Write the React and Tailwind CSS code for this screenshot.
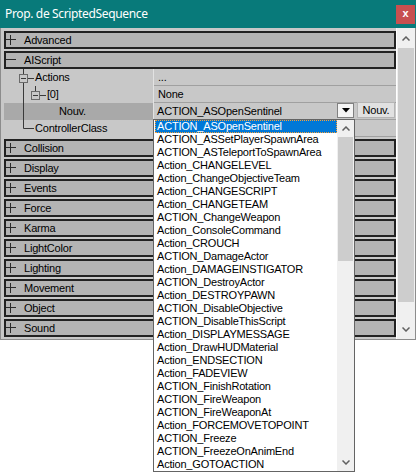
import React from "react";

const categories = [
  "Collision",
  "Display",
  "Events",
  "Force",
  "Karma",
  "LightColor",
  "Lighting",
  "Movement",
  "Object",
  "Sound",
];

const actions = [
  "ACTION_ASOpenSentinel",
  "ACTION_ASSetPlayerSpawnArea",
  "ACTION_ASTeleportToSpawnArea",
  "Action_CHANGELEVEL",
  "Action_ChangeObjectiveTeam",
  "Action_CHANGESCRIPT",
  "Action_CHANGETEAM",
  "ACTION_ChangeWeapon",
  "Action_ConsoleCommand",
  "Action_CROUCH",
  "ACTION_DamageActor",
  "Action_DAMAGEINSTIGATOR",
  "ACTION_DestroyActor",
  "Action_DESTROYPAWN",
  "ACTION_DisableObjective",
  "ACTION_DisableThisScript",
  "Action_DISPLAYMESSAGE",
  "Action_DrawHUDMaterial",
  "Action_ENDSECTION",
  "Action_FADEVIEW",
  "ACTION_FinishRotation",
  "ACTION_FireWeapon",
  "ACTION_FireWeaponAt",
  "Action_FORCEMOVETOPOINT",
  "ACTION_Freeze",
  "ACTION_FreezeOnAnimEnd",
  "Action_GOTOACTION",
];

function Chevron({ down = false }) {
  return (
    <svg width="8" height="5" viewBox="0 0 8 5">
      <polyline
        points={down ? "0.5,0.5 4,4 7.5,0.5" : "0.5,4.5 4,1 7.5,4.5"}
        fill="none"
        stroke="#606060"
        strokeWidth="1.5"
      />
    </svg>
  );
}

function Expander({ open }) {
  return (
    <svg width="10" height="10" viewBox="0 0 10 10" className="shrink-0">
      <line x1="0" y1="4.5" x2="10" y2="4.5" stroke="#2a2a2a" strokeWidth="1" />
      {!open && <line x1="4.5" y1="0" x2="4.5" y2="10" stroke="#2a2a2a" strokeWidth="1" />}
    </svg>
  );
}

function Category({ label, open = false }) {
  return (
    <div className="h-[18px] border-2 border-[#222222] bg-[#b4b4b4] flex items-center">
      <Expander open={open} />
      <span className="ml-[8px] leading-none">{label}</span>
    </div>
  );
}

function Row({ left, right, leftClass = "", rightClass = "", children }) {
  return (
    <div className="h-[17px] flex">
      <div className={"w-[149px] h-full flex items-center " + leftClass}>{left}</div>
      <div className="w-px h-full bg-[#e2e2e2]" />
      <div className={"flex-1 h-full flex items-center border-b border-[#a0a0a0] " + rightClass}>
        {right}
        {children}
      </div>
    </div>
  );
}

export default function App() {
  return (
    <div
      className="relative w-[416px] h-[472px] bg-white text-black text-[11px] tracking-[-0.2px]"
      style={{ fontFamily: "'Liberation Sans', Arial, sans-serif" }}
    >
      {/* window */}
      <div className="w-[416px] border-x border-b border-[#8c8c8c]">
        <div className="h-[28px] -mx-px bg-[#087a7a] flex items-center justify-between">
          <span
            className="pl-[5px] text-white text-[12px] tracking-[-0.35px]"
            style={{ fontFamily: "'Noto Sans', 'Open Sans', sans-serif" }}
          >
            Prop. de ScriptedSequence
          </span>
          <div className="w-[19px] h-[19px] mr-[1px] bg-[#c75050] flex items-center justify-center text-white text-[11px] font-bold leading-none pb-[2px]">
            x
          </div>
        </div>

        <div className="flex bg-[#c8c8c8]">
          {/* property grid */}
          <div className="flex-1 pl-[3px] pt-[3px] pb-[2px] flex flex-col">
            <Category label="Advanced" />
            <div className="h-[2px]" />
            <Category label="AIScript" open />

            <div className="relative">
              <Row left={<span className="pl-[31px]">Actions</span>} right={<span className="pl-[4px]">...</span>} />
              <Row left={<span className="pl-[43px]">[0]</span>} right={<span className="pl-[4px]">None</span>} />
              <Row
                left={<span className="pl-[55px]">Nouv.</span>}
                leftClass="bg-[#a9a9a9]"
                right={<span className="pl-[3px] flex-1">ACTION_ASOpenSentinel</span>}
              >
                <div className="w-[17px] h-[15px] mb-[2px] border border-[#808080] bg-[#f4f4f4] flex items-center justify-center">
                  <svg width="8" height="5" viewBox="0 0 8 5">
                    <polygon points="0,0 8,0 4,4.5" fill="#000" />
                  </svg>
                </div>
                <div className="w-[38px] h-[16px] ml-[3px] mr-[1px] mb-[2px] border border-[#b5b5b5] bg-[#e1e1e1] flex items-center justify-center">
                  Nouv.
                </div>
              </Row>
              <Row left={<span className="pl-[31px]">ControllerClass</span>} />

              {/* tree connector lines */}
              <svg className="absolute left-0 top-0" width="60" height="68" viewBox="0 0 60 68">
                <g stroke="#3a3a3a" strokeWidth="1" fill="none">
                  <line x1="19.5" y1="0" x2="19.5" y2="5" />
                  <rect x="15.5" y="5.5" width="8" height="8" stroke="#6a6a6a" />
                  <line x1="17" y1="9.5" x2="22" y2="9.5" />
                  <line x1="24" y1="9.5" x2="30" y2="9.5" />
                  <line x1="19.5" y1="14" x2="19.5" y2="59.5" />
                  <line x1="19.5" y1="59.5" x2="30" y2="59.5" />
                  <line x1="31.5" y1="17" x2="31.5" y2="22" />
                  <rect x="27.5" y="22.5" width="8" height="8" stroke="#6a6a6a" />
                  <line x1="29" y1="26.5" x2="34" y2="26.5" />
                  <line x1="36" y1="26.5" x2="42" y2="26.5" />
                </g>
              </svg>
            </div>

            <div className="flex flex-col gap-[2px] mt-[2px]">
              {categories.map((c) => (
                <Category key={c} label={c} />
              ))}
            </div>
          </div>

          {/* vertical scrollbar */}
          <div className="w-[19px] bg-[#f0f0f0] flex flex-col border-l border-[#ffffff]">
            <div className="h-[20px] flex items-center justify-center">
              <Chevron />
            </div>
            <div className="h-[254px] mx-[1px] bg-[#cdcdcd]" />
            <div className="flex-1" />
            <div className="h-[19px] flex items-center justify-center">
              <Chevron down />
            </div>
          </div>
        </div>
      </div>

      {/* open combo list */}
      <div className="absolute left-[153px] top-[119px] w-[202px] h-[353px] border border-[#646464] bg-white flex">
        <div className="flex-1 flex flex-col">
          {actions.map((a, i) => (
            <div
              key={a}
              className={
                "h-[13px] leading-[11px] ml-[1px] pl-[1px] border whitespace-nowrap " +
                (i === 0
                  ? "bg-[#0078d7] text-white border-dotted border-[#f7a13a]"
                  : "border-transparent")
              }
            >
              {a}
            </div>
          ))}
        </div>
        <div className="w-[17px] bg-[#f0f0f0] flex flex-col">
          <div className="h-[17px] flex items-center justify-center">
            <Chevron />
          </div>
          <div className="h-[124px] mx-[1px] bg-[#cdcdcd]" />
          <div className="flex-1" />
          <div className="h-[17px] flex items-center justify-center">
            <Chevron down />
          </div>
        </div>
      </div>
    </div>
  );
}
